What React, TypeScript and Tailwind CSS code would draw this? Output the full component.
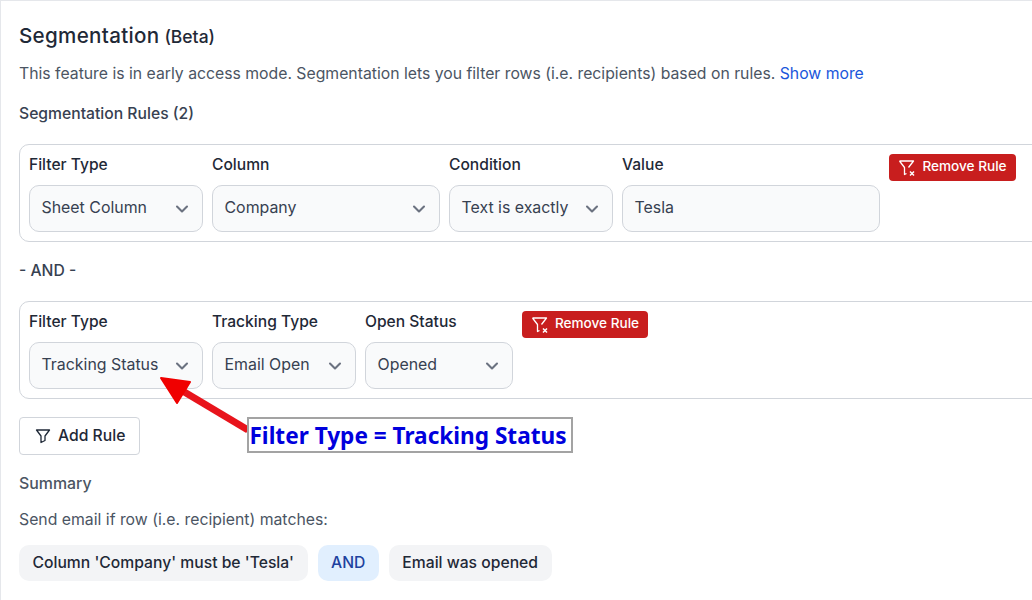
import { ChevronDown } from 'lucide-react';

function Field({
  label,
  value,
  width,
  plain,
}: Readonly<{ label: string; value: string; width: string; plain?: boolean }>) {
  return (
    <div className={`flex shrink-0 flex-col gap-[8px] ${width}`}>
      <label className="text-[15.6px] leading-[24px] font-medium text-[#1f2937]">{label}</label>
      <div className="flex h-[47px] items-center justify-between rounded-[10px] border border-[#d1d5db] bg-[#f9fafb] pr-[10px] pl-[11.5px] text-[15.9px] text-[#374151]">
        <span className="mb-[2px]">{value}</span>
        {!plain && <ChevronDown size={20} strokeWidth={2.5} className="text-[#6b7280]" />}
      </div>
    </div>
  );
}

function RemoveButton({ width }: Readonly<{ width: string }>) {
  return (
    <button
      className={`mt-[1px] flex h-[27px] shrink-0 items-center justify-center gap-[6px] rounded-[4px] bg-[#c81e1e] text-[13.6px] font-medium text-white ${width}`}
    >
      <svg width="18" height="18" viewBox="0 0 18 18" fill="none" stroke="currentColor" strokeWidth="1.3" strokeLinejoin="round">
        <path d="M1.5 2 H15.5 L10.5 8.5 M1.5 2 L6.5 8.5 V15.5 L8.5 14.5" />
        <path d="M12 12.5 L16 16.5 M16 12.5 L12 16.5" strokeWidth="1.5" />
      </svg>
      <span className="mb-[2px]">Remove Rule</span>
    </button>
  );
}

function Chip({ text, blue }: Readonly<{ text: string; blue?: boolean }>) {
  return (
    <span
      className={`flex h-[36px] items-center rounded-[10px] px-[13.5px] text-[15.7px] font-medium ${
        blue ? 'bg-[#e1effe] text-[#1e429f]' : 'bg-[#f3f4f6] text-[#1f2937]'
      }`}
    >
      {text}
    </span>
  );
}

export default function App() {
  return (
    <div
      className="relative h-[600px] w-[1032px] overflow-hidden border-t border-l border-[#e5e7eb] bg-white pt-[20px] pl-[18px]"
      style={{ fontFamily: 'Inter, "Liberation Sans", sans-serif' }}
    >
      <h2 className="flex items-baseline gap-[5px] text-[20.6px] leading-[30px] font-medium tracking-[0.3px] text-[#1f2937]">
        Segmentation <span className="text-[17.5px] tracking-normal">(Beta)</span>
      </h2>
      <p className="mt-[10px] text-[15.77px] leading-[24px] whitespace-nowrap text-[#4b5563]">
        This feature is in early access mode. Segmentation lets you filter rows (i.e. recipients) based on rules.{' '}
        <span className="text-[#1a56db]">Show more</span>
      </p>
      <div className="mt-[16px] text-[15.7px] leading-[24px] font-medium text-[#374151]">Segmentation Rules (2)</div>

      <div className="mt-[18px] flex h-[98px] w-[1040px] gap-[9px] rounded-[10px] border border-[#d1d5db] pt-[8px] pl-[9px]">
        <Field label="Filter Type" value="Sheet Column" width="w-[174px]" />
        <Field label="Column" value="Company" width="w-[228px]" />
        <Field label="Condition" value="Text is exactly" width="w-[164px]" />
        <Field label="Value" value="Tesla" width="w-[258px]" plain />
        <RemoveButton width="w-[127px]" />
      </div>

      <div className="mt-[17px] text-[15.7px] leading-[24px] font-medium text-[#374151]">- AND -</div>

      <div className="mt-[18px] flex h-[98px] w-[1040px] gap-[9px] rounded-[10px] border border-[#d1d5db] pt-[8px] pl-[9px]">
        <Field label="Filter Type" value="Tracking Status" width="w-[174px]" />
        <Field label="Tracking Type" value="Email Open" width="w-[144px]" />
        <Field label="Open Status" value="Opened" width="w-[148px]" />
        <RemoveButton width="w-[126px]" />
      </div>

      <button className="mt-[18px] flex h-[38px] w-[121px] items-center gap-[7px] rounded-[4px] border border-[#d1d5db] bg-white pl-[15px] text-[15.7px] font-medium text-[#1f2937]">
        <svg width="16" height="16" viewBox="0 0 16 16" fill="none" stroke="currentColor" strokeWidth="1.3" strokeLinejoin="round">
          <path d="M1.5 2 H14.5 L10 8 V12.5 L6 14.5 V8 Z" />
        </svg>
        Add Rule
      </button>

      <div className="mt-[17px] text-[15.9px] leading-[24px] font-medium text-[#4b5563]">Summary</div>
      <p className="mt-[12px] text-[15.8px] leading-[24px] text-[#4b5563]">Send email if row (i.e. recipient) matches:</p>
      <div className="mt-[13px] flex gap-[10px]">
        <Chip text="Column 'Company' must be 'Tesla'" />
        <Chip text="AND" blue />
        <Chip text="Email was opened" />
      </div>

      <svg className="absolute top-[370px] left-[155px]" width="100" height="70" viewBox="0 0 100 70">
        <path d="M92 59 L25 19" stroke="#e8141c" strokeWidth="7" />
        <path d="M5 7 L34 11 L21 32 Z" fill="#f00000" stroke="#f00000" strokeWidth="2" strokeLinejoin="round" />
      </svg>
      <div
        className="absolute top-[416px] left-[246px] flex h-[36px] w-[326px] items-center justify-center border-2 border-[#a3a3a3] bg-white pt-[1px] pr-[4px] text-[22.6px] font-bold whitespace-nowrap text-[#0000dd]"
        style={{ fontFamily: '"Noto Sans", sans-serif' }}
      >
        Filter Type = Tracking Status
      </div>
    </div>
  );
}
